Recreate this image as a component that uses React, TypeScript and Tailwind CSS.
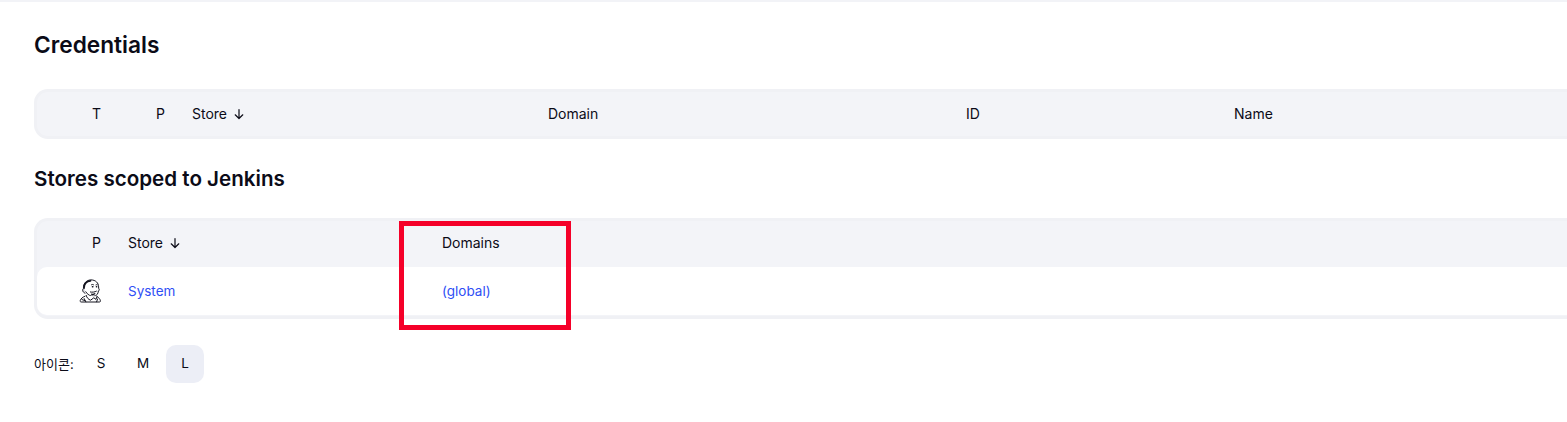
const font = { fontFamily: "Inter, 'Noto Sans CJK KR', sans-serif" };

const SortArrow = () => (
  <svg width="12" height="12" viewBox="0 0 12 12" fill="none" stroke="#0b0b17" strokeWidth="1.2" strokeLinecap="round" strokeLinejoin="round" className="ml-[6px]">
    <path d="M6 1.5v9M2.2 6.8 6 10.5l3.8-3.7" />
  </svg>
);

const JenkinsHead = () => (
  <svg width="24" height="24" viewBox="0 0 24 24" fill="none" stroke="#14141f" strokeWidth="1" strokeLinejoin="round" strokeLinecap="round">
    <path d="M6 17.2c-2.4.9-4.2 2.4-4.8 4.4-.2.8.2 1.4 1 1.4h18c1 0 1.4-.5 1.2-1.3-.4-1.7-1.4-3-3-3.9" fill="#fff" />
    <path d="M4.6 11C3.4 5.4 7 .9 12 .9c4.6 0 7.6 3 7.6 7 0 1 0 1.8.6 2.6.4.6 0 1.2-.8 1.3-.2 2.6-1.4 5.2-4.6 5.4-3.6.2-6.4-1.6-8-4.4" fill="#fff" />
    <path d="M5 8.6C5.2 5 7.6 2.2 11.4 1.8" strokeWidth="1.8" />
    <path d="M5.2 9.4c-2-.6-2.6 3.6.8 4.8" fill="#d9d9de" />
    <path d="M12.4 5.8c.7-.5 1.5-.5 2.2 0M17 5.8c.4-.2.8-.2 1.2 0" />
    <path d="M13.4 7.8h.5M17.4 7.8h.3" strokeWidth="1.4" />
    <path d="M11.4 13c1.8.4 4.2.2 6-.8" />
    <path d="M12.6 15.2c1.2.4 2.4.2 3.2-.4" strokeWidth="1.4" />
    <path d="M7.2 16.4c.5 2.4 2.2 4 4.4 4.8l3.2-2.4 2.2 1.6 1-3" fill="#fff" />
    <path d="M5.2 19.6l1.6 3.2M18.6 20l-1 2.8M3 20.6l3 1" />
  </svg>
);

export default function App() {
  return (
    <div style={font} className="relative h-[422px] w-[1567px] overflow-hidden bg-white text-[#0b0b17] text-[14px] leading-none">
      <div className="h-[2px] bg-[#f2f3f7]" />

      <div className="w-[1600px] pl-[34px]">
        <h1 className="mt-[29px] text-[22.7px] leading-[27px] font-semibold">Credentials</h1>

        <div className="mt-[31px] rounded-l-[14px] bg-[#f3f4f8] border-y-[3px] border-l-[3px] border-[#f0f1f5] h-[50px] grid grid-cols-[90px_49px_340px_418px_268px_1fr] items-center">
          <div className="pl-[55px]">T</div>
          <div className="pl-[29px]">P</div>
          <div className="flex items-center pl-[16px]">Store<SortArrow /></div>
          <div className="pl-[32px]">Domain</div>
          <div className="pl-[32px]">ID</div>
          <div className="pl-[32px]">Name</div>
        </div>

        <h2 className="mt-[27px] text-[20.6px] leading-[25px] font-semibold">Stores scoped to Jenkins</h2>

        <div className="mt-[27px] rounded-l-[14px] bg-[#f3f4f8] border-y-[3px] border-l-[3px] border-[#f0f1f5] pb-[1px]">
          <div className="h-[46px] pb-[2px] grid grid-cols-[91px_314px_1fr] items-center">
            <div className="pl-[55px]">P</div>
            <div className="flex items-center">Store<SortArrow /></div>
            <div>Domains</div>
          </div>
          <div className="h-[48px] rounded-l-[10px] bg-white grid grid-cols-[91px_314px_1fr] items-center">
            <div className="pl-[42px]"><JenkinsHead /></div>
            <a className="pt-[2px] text-[#2f4ff5] text-[13.5px]">System</a>
            <a className="pt-[2px] text-[#2f4ff5] text-[13.5px]">(global)</a>
          </div>
        </div>

        <div className="mt-[26px] flex items-center gap-[2px] text-[13.5px]">
          <span className="mr-[6px] text-[13px]">아이콘:</span>
          <span className="w-[38px] h-[38px] pl-[1px] flex items-center justify-center rounded-[10px]">S</span>
          <span className="w-[38px] h-[38px] pl-[1px] flex items-center justify-center rounded-[10px] ml-[2px]">M</span>
          <span className="w-[38px] h-[38px] pl-[1px] flex items-center justify-center rounded-[10px] ml-[2px] bg-[#eceef6]">L</span>
        </div>
      </div>

      <div className="absolute left-[399px] top-[221px] w-[172px] h-[109px] border-[5px] border-[#f50029]" />
    </div>
  );
}
